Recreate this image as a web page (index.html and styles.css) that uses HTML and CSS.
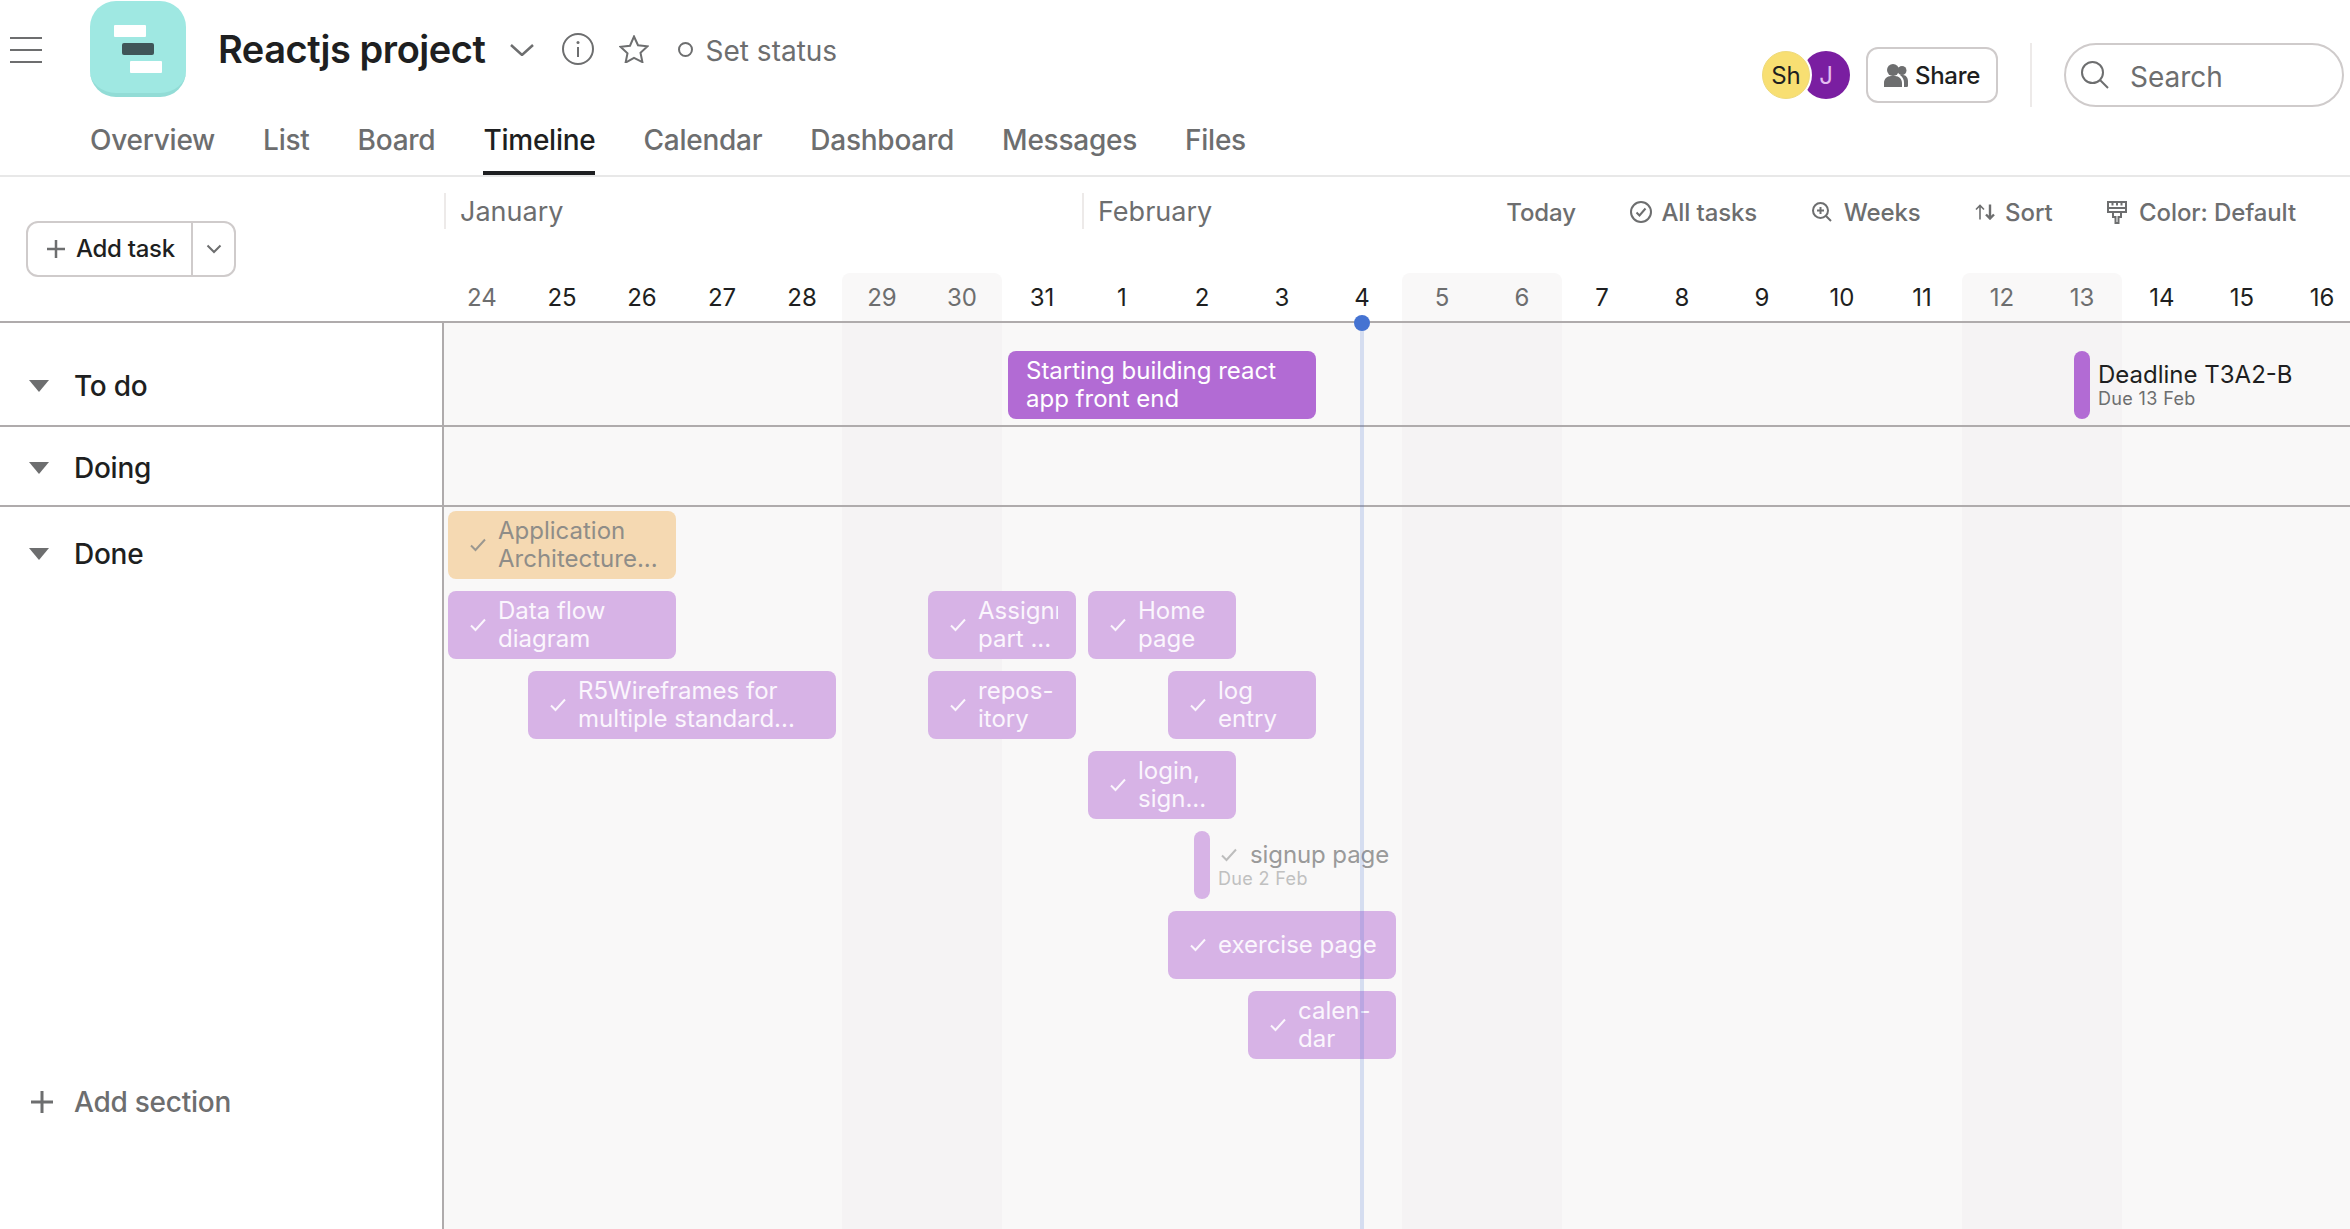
FILE: index.html
```html
<!DOCTYPE html>
<html lang="en">

<head>
    <meta charset="UTF-8">
    <title>Reactjs project - Timeline</title>
    <link rel="stylesheet" href="styles.css">
</head>

<body>

    <!-- Project header -->
    <header class="page-header">
        <div class="top-row">
            <div class="project">
                <svg class="menu-icon" width="32" height="26" viewBox="0 0 32 26"><path d="M0 1h32M0 13h32M0 25h32" /></svg>
                <div class="logo">
                    <span class="logo-bar"></span>
                    <span class="logo-bar logo-bar-dark"></span>
                    <span class="logo-bar logo-bar-last"></span>
                </div>
                <h1>Reactjs project</h1>
                <svg class="title-chevron" width="24" height="12" viewBox="0 0 24 12"><path d="M1 1l11 10L23 1" /></svg>
                <svg class="info-icon" width="32" height="32" viewBox="0 0 32 32"><circle cx="16" cy="16" r="15" /><path d="M16 14v10" /><circle class="solid" cx="16" cy="9.500" r="1.500" /></svg>
                <svg class="star-icon" width="30" height="28" viewBox="0 0 30 28"><path d="M15 1.500l4 8.700 9.500 1.100-7 6.500 1.900 9.300L15 22.900l-8.400 4.700 1.900-9.300-7-6.500 9.500-1.100z" /></svg>
                <span class="status-dot"></span>
                <span class="status-text">Set status</span>
            </div>
            <div class="actions">
                <div class="avatars">
                    <span class="avatar avatar-sh">Sh</span>
                    <span class="avatar avatar-j">J</span>
                </div>
                <button class="share-btn">
                    <svg width="24" height="24" viewBox="0 0 24 24"><circle cx="9" cy="7" r="6" /><circle cx="18" cy="7.500" r="4.500" /><path d="M0 24v-4c0-4 3-7 7-7h4c4 0 7 3 7 7v4zM16 12h3c3 0 5 3 5 6v5c0 1-1 1-4 1v-4c0-3-1-6-4-8z" /></svg>
                    Share
                </button>
                <span class="actions-divider"></span>
                <div class="search">
                    <svg width="28" height="28" viewBox="0 0 28 28"><circle cx="11.500" cy="11.500" r="10.500" /><path d="M19 19l8 8" /></svg>
                    <span class="search-text">Search</span>
                </div>
            </div>
        </div>
        <nav class="tabs">
            <a href="#">Overview</a>
            <a href="#">List</a>
            <a href="#">Board</a>
            <a href="#" class="active">Timeline</a>
            <a href="#">Calendar</a>
            <a href="#">Dashboard</a>
            <a href="#">Messages</a>
            <a href="#">Files</a>
        </nav>
    </header>

    <!-- Timeline head -->
    <section class="timeline-head">
        <div class="add-area">
            <div class="add-task">
                <span class="add-task-main">
                    <svg width="20" height="20" viewBox="0 0 20 20"><path d="M10 1v18M1 10h18" /></svg>
                    Add task
                </span>
                <span class="add-task-more">
                    <svg width="16" height="10" viewBox="0 0 16 10"><path d="M1.500 1.500L8 8l6.500-6.500" /></svg>
                </span>
            </div>
        </div>
        <div class="calendar-head">
            <div class="months">
                <span class="month month-jan">January</span>
                <span class="month">February</span>
                <div class="toolbar">
                    <span class="tool tool-today">Today</span>
                    <span class="tool tool-tasks">
                        <svg width="22" height="22" viewBox="0 0 22 22"><circle cx="11" cy="11" r="10" /><path d="M6.500 11.500l3 3 6-7" /></svg>
                        All tasks
                    </span>
                    <span class="tool">
                        <svg width="20" height="20" viewBox="0 0 20 20"><circle cx="8.500" cy="8.500" r="7.500" /><path d="M14 14l5 5M8.500 5v7M5 8.500h7" /></svg>
                        Weeks
                    </span>
                    <span class="tool tool-sort">
                        <svg width="20" height="16" viewBox="0 0 20 16"><path d="M5 15.500V2M1 5.500L5 1.500l4 4" stroke-width="1.600" /><path d="M15 .5V14M11 10.500l4 4 4-4" stroke-width="2.400" /></svg>
                        Sort
                    </span>
                    <span class="tool">
                        <svg width="20" height="23" viewBox="0 0 20 23"><path d="M1 1h18v10H1zM1 7h18M5.500 1v3.500M10 1v3.500M14.500 1v3.500M6 11v5h2.500v6h3v-6H14v-5" /></svg>
                        Color: Default
                    </span>
                </div>
            </div>
            <div class="days">
                <span class="day past">24</span>
                <span class="day">25</span>
                <span class="day">26</span>
                <span class="day">27</span>
                <span class="day">28</span>
                <span class="day weekend first">29</span>
                <span class="day weekend last">30</span>
                <span class="day">31</span>
                <span class="day">1</span>
                <span class="day">2</span>
                <span class="day">3</span>
                <span class="day">4</span>
                <span class="day weekend first">5</span>
                <span class="day weekend last">6</span>
                <span class="day">7</span>
                <span class="day">8</span>
                <span class="day">9</span>
                <span class="day">10</span>
                <span class="day">11</span>
                <span class="day weekend first">12</span>
                <span class="day weekend last">13</span>
                <span class="day">14</span>
                <span class="day">15</span>
                <span class="day">16</span>
            </div>
        </div>
    </section>

    <!-- Sections and their tasks -->
    <main class="gantt">
        <div class="today-line"></div>

        <section class="row row-todo">
            <div class="row-label">
                <h2><i class="caret"></i>To do</h2>
            </div>
            <div class="lane">
                <div class="lane-grid">
                    <div class="bar bar-open" style="grid-column: 8 / span 4; grid-row: 1">
                        <div class="bar-text"><span>Starting building react</span><span>app front end</span></div>
                    </div>
                    <div class="milestone" style="grid-column: 21; grid-row: 1">
                        <span class="pin"></span>
                        <div class="pin-text">
                            <span class="pin-title">Deadline T3A2-B</span>
                            <span class="pin-due">Due 13 Feb</span>
                        </div>
                    </div>
                </div>
            </div>
        </section>

        <section class="row row-doing">
            <div class="row-label">
                <h2><i class="caret"></i>Doing</h2>
            </div>
            <div class="lane"></div>
        </section>

        <section class="row row-done">
            <div class="row-label">
                <h2><i class="caret"></i>Done</h2>
                <div class="add-section">
                    <svg width="24" height="24" viewBox="0 0 24 24"><path d="M12 1v22M1 12h22" /></svg>
                    Add section
                </div>
            </div>
            <div class="lane">
                <div class="lane-grid">
                    <div class="bar bar-done bar-orange" style="grid-column: 1 / span 3; grid-row: 1">
                        <svg class="check" width="16" height="14" viewBox="0 0 16 14"><path d="M1 7.500l4.500 4.500L15 1.500" /></svg>
                        <div class="bar-text"><span>Application</span><span>Architecture...</span></div>
                    </div>
                    <div class="bar bar-done" style="grid-column: 1 / span 3; grid-row: 2">
                        <svg class="check" width="16" height="14" viewBox="0 0 16 14"><path d="M1 7.500l4.500 4.500L15 1.500" /></svg>
                        <div class="bar-text"><span>Data flow</span><span>diagram</span></div>
                    </div>
                    <div class="bar bar-done" style="grid-column: 7 / span 2; grid-row: 2">
                        <svg class="check" width="16" height="14" viewBox="0 0 16 14"><path d="M1 7.500l4.500 4.500L15 1.500" /></svg>
                        <div class="bar-text"><span>Assignment</span><span>part ...</span></div>
                    </div>
                    <div class="bar bar-done" style="grid-column: 9 / span 2; grid-row: 2">
                        <svg class="check" width="16" height="14" viewBox="0 0 16 14"><path d="M1 7.500l4.500 4.500L15 1.500" /></svg>
                        <div class="bar-text"><span>Home</span><span>page</span></div>
                    </div>
                    <div class="bar bar-done" style="grid-column: 2 / span 4; grid-row: 3">
                        <svg class="check" width="16" height="14" viewBox="0 0 16 14"><path d="M1 7.500l4.500 4.500L15 1.500" /></svg>
                        <div class="bar-text"><span>R5Wireframes for</span><span>multiple standard...</span></div>
                    </div>
                    <div class="bar bar-done" style="grid-column: 7 / span 2; grid-row: 3">
                        <svg class="check" width="16" height="14" viewBox="0 0 16 14"><path d="M1 7.500l4.500 4.500L15 1.500" /></svg>
                        <div class="bar-text"><span>repos-</span><span>itory</span></div>
                    </div>
                    <div class="bar bar-done" style="grid-column: 10 / span 2; grid-row: 3">
                        <svg class="check" width="16" height="14" viewBox="0 0 16 14"><path d="M1 7.500l4.500 4.500L15 1.500" /></svg>
                        <div class="bar-text"><span>log</span><span>entry</span></div>
                    </div>
                    <div class="bar bar-done" style="grid-column: 9 / span 2; grid-row: 4">
                        <svg class="check" width="16" height="14" viewBox="0 0 16 14"><path d="M1 7.500l4.500 4.500L15 1.500" /></svg>
                        <div class="bar-text"><span>login,</span><span>sign...</span></div>
                    </div>
                    <div class="milestone milestone-done" style="grid-column: 10; grid-row: 5">
                        <span class="pin"></span>
                        <div class="pin-text">
                            <span class="pin-title">
                                <svg class="check" width="16" height="14" viewBox="0 0 16 14"><path d="M1 7.500l4.500 4.500L15 1.500" /></svg>
                                signup page
                            </span>
                            <span class="pin-due">Due 2 Feb</span>
                        </div>
                    </div>
                    <div class="bar bar-done" style="grid-column: 10 / span 3; grid-row: 6">
                        <svg class="check" width="16" height="14" viewBox="0 0 16 14"><path d="M1 7.500l4.500 4.500L15 1.500" /></svg>
                        <div class="bar-text"><span>exercise page</span></div>
                    </div>
                    <div class="bar bar-done" style="grid-column: 11 / span 2; grid-row: 7">
                        <svg class="check" width="16" height="14" viewBox="0 0 16 14"><path d="M1 7.500l4.500 4.500L15 1.500" /></svg>
                        <div class="bar-text"><span>calen-</span><span>dar</span></div>
                    </div>
                </div>
            </div>
        </section>
    </main>

</body>
</html>
```

FILE: styles.css
```css
/* General Reset */
* {
    margin: 0;
    padding: 0;
    box-sizing: border-box;
}

html, body {
    height: 100%;
}

body {
    width: 2350px;
    font-family: Inter, "Noto Sans", sans-serif;
    color: #1e1f21;
    background-color: #fff;
    overflow: hidden;
}

svg {
    display: block;
    flex: none;
    fill: none;
    stroke: #6d6e6f;
    stroke-width: 2;
}

/* Project header */
.page-header {
    border-bottom: 2px solid #e8e8e8;
}

.top-row {
    display: flex;
    height: 116px;
}

.project {
    display: flex;
    align-items: center;
    height: 98px;
    padding-left: 10px;
}

.menu-icon {
    margin-top: 2px;
}

.logo {
    display: flex;
    flex-direction: column;
    width: 96px;
    height: 96px;
    margin-left: 48px;
    padding-top: 24px;
    background-color: #9fe8e2;
    border-bottom: 4px solid #92dcd6;
    border-radius: 26px;
}

.logo-bar {
    width: 32px;
    height: 12px;
    margin-left: 24px;
    margin-bottom: 6px;
    background-color: #fff;
    border-radius: 1px;
}

.logo-bar-dark {
    margin-left: 32px;
    background-color: #3f5558;
    border-radius: 2px;
}

.logo-bar-last {
    margin-left: 40px;
}

h1 {
    margin-left: 32px;
    font-size: 38px;
    font-weight: 600;
    letter-spacing: -0.45px;
}

.title-chevron {
    margin-left: 24px;
    margin-top: 2px;
    stroke-width: 2.500;
}

.info-icon {
    margin-left: 28px;
}

.info-icon .solid {
    fill: #6d6e6f;
    stroke: none;
}

.star-icon {
    margin-left: 25px;
}

.status-dot {
    width: 15px;
    height: 15px;
    margin-left: 29px;
    border: 2px solid #6d6e6f;
    border-radius: 50%;
}

.status-text {
    margin-left: 13px;
    margin-top: 3px;
    font-size: 28px;
    color: #6d6e6f;
}

.actions {
    display: flex;
    align-items: center;
    height: 64px;
    margin-top: 43px;
    margin-left: auto;
    padding-right: 6px;
}

.avatars {
    display: flex;
}

.avatar {
    display: flex;
    align-items: center;
    justify-content: center;
    width: 48px;
    height: 48px;
    border-radius: 50%;
    font-size: 24px;
}

.avatar-sh {
    position: relative;
    background-color: #f8df72;
    box-shadow: 0 0 0 2px #fff;
    border: 1px solid #eeda7d;
}

.avatar-j {
    margin-left: -8px;
    color: #e3bdf0;
    background-color: #7a1ea1;
}

.share-btn {
    display: flex;
    align-items: center;
    gap: 7px;
    width: 132px;
    height: 56px;
    margin-left: 16px;
    padding-left: 16px;
    font-family: inherit;
    font-size: 24px;
    font-weight: 500;
    letter-spacing: -0.3px;
    color: #1e1f21;
    background-color: #fff;
    border: 2px solid #cfcbcb;
    border-radius: 12px;
}

.share-btn svg {
    fill: #6d6e6f;
    stroke: none;
}

.actions-divider {
    width: 2px;
    height: 64px;
    margin-left: 32px;
    background-color: #edeae9;
}

.search {
    display: flex;
    align-items: center;
    gap: 21px;
    width: 280px;
    height: 64px;
    margin-left: 32px;
    padding-left: 15px;
    font-size: 28px;
    color: #6d6e6f;
    border: 2px solid #cfcbcb;
    border-radius: 32px;
}

.search-text {
    margin-top: 3px;
}

/* Tabs */
.tabs {
    display: flex;
    gap: 48px;
    height: 59px;
    padding-left: 90px;
}

.tabs a {
    height: 59px;
    padding-top: 7px;
    font-size: 28px;
    font-weight: 500;
    letter-spacing: -0.25px;
    line-height: 34px;
    color: #6d6e6f;
    text-decoration: none;
    border-bottom: 4px solid transparent;
}

.tabs a.active {
    color: #1e1f21;
    border-bottom-color: #1e1f21;
}

/* Timeline head */
.timeline-head {
    display: flex;
    height: 146px;
    border-bottom: 2px solid #afabac;
}

.add-area {
    flex: none;
    width: 441px;
    padding-top: 44px;
    padding-left: 26px;
}

.add-task {
    display: flex;
    width: 210px;
    height: 56px;
    font-size: 24px;
    font-weight: 500;
    letter-spacing: -0.3px;
    border: 2px solid #cfcbcb;
    border-radius: 12px;
}

.add-task-main {
    display: flex;
    align-items: center;
    gap: 10px;
    width: 165px;
    padding-left: 18px;
    padding-bottom: 2px;
    border-right: 2px solid #cfcbcb;
}

.add-task-main svg {
    margin-top: 2px;
    stroke-width: 2.500;
}

.add-task-more {
    display: flex;
    align-items: center;
    justify-content: center;
    flex: 1;
}

.calendar-head {
    display: flex;
    flex-direction: column;
    justify-content: space-between;
    width: 1920px;
}

.months {
    display: flex;
    align-items: center;
    height: 36px;
    margin-top: 16px;
}

.month {
    padding-left: 14px;
    height: 36px;
    font-size: 27px;
    line-height: 37px;
    color: #6d6e6f;
    border-left: 2px solid #edeae9;
}

.month-jan {
    width: 638px;
    margin-left: 3px;
}

.toolbar {
    display: flex;
    align-items: center;
    gap: 54.500px;
    margin-left: auto;
    margin-top: 2px;
    padding-right: 65px;
    font-size: 24px;
    font-weight: 500;
    letter-spacing: -0.1px;
    color: #6d6e6f;
}

.tool {
    display: flex;
    align-items: center;
    gap: 12px;
    white-space: nowrap;
}

.tool-tasks {
    gap: 9px;
}

.tool-sort {
    gap: 10px;
}

/* Day numbers */
.days {
    display: flex;
    height: 48px;
    margin-left: 1px;
}

.day {
    flex: none;
    width: 80px;
    padding-top: 11px;
    font-size: 24px;
    line-height: 28px;
    text-align: center;
}

.day.past {
    color: #6d6e6f;
}

.day.weekend {
    color: #6d6e6f;
    background-color: #f9f8f8;
}

.day.first {
    border-top-left-radius: 8px;
}

.day.last {
    border-top-right-radius: 8px;
}

/* Sections */
.gantt {
    position: relative;
    height: 906px;
}

.today-line {
    position: absolute;
    z-index: 2;
    top: 0;
    bottom: 0;
    left: 1360px;
    width: 4px;
    background-color: rgba(69, 115, 210, 0.2);
}

.today-line::before {
    content: "";
    position: absolute;
    top: -8px;
    left: -6px;
    width: 16px;
    height: 16px;
    background-color: #4573d2;
    border-radius: 50%;
}

.row {
    display: flex;
    border-bottom: 2px solid #afabac;
}

.row-todo {
    height: 104px;
}

.row-doing {
    height: 80px;
}

.row-done {
    height: 722px;
    border-bottom: none;
}

.row-label {
    flex: none;
    width: 444px;
    border-right: 2px solid #afabac;
}

.row-todo .row-label {
    padding-top: 46px;
}

.row-doing .row-label {
    padding-top: 24px;
}

.row-done .row-label {
    padding-top: 30px;
}

h2 {
    display: flex;
    align-items: center;
    padding-left: 29px;
    font-size: 28px;
    font-weight: 500;
    letter-spacing: -0.25px;
    line-height: 34px;
}

.caret {
    width: 0;
    height: 0;
    margin-right: 25px;
    border-top: 12px solid #6d6e6f;
    border-left: 10px solid transparent;
    border-right: 10px solid transparent;
}

.add-section {
    display: flex;
    align-items: center;
    gap: 20px;
    margin-top: 514px;
    padding-left: 30px;
    font-size: 28px;
    font-weight: 500;
    letter-spacing: -0.25px;
    line-height: 34px;
    color: #6d6e6f;
}

.add-section svg {
    stroke-width: 3;
}

/* Lanes with weekend stripes */
.lane {
    flex: 1;
    min-width: 0;
    background-color: #f9f8f8;
    background-image: linear-gradient(90deg, #f9f8f8 398px, #f5f3f4 398px, #f5f3f4 558px, #f9f8f8 558px, #f9f8f8 958px, #f5f3f4 958px, #f5f3f4 1118px, #f9f8f8 1118px, #f9f8f8 1518px, #f5f3f4 1518px, #f5f3f4 1678px, #f9f8f8 1678px);
}

.lane-grid {
    display: grid;
    grid-template-columns: repeat(24, 80px);
    grid-auto-rows: 80px;
    margin-left: -3px;
}

.row-todo .lane-grid {
    padding-top: 28px;
}

.row-done .lane-grid {
    padding-top: 4px;
}

/* Task bars */
.bar {
    display: flex;
    align-items: center;
    height: 68px;
    margin: 0 5px 0 7px;
    padding-left: 22px;
    font-size: 24px;
    line-height: 28px;
    border-radius: 8px;
    min-width: 0;
}

.bar-text {
    flex: 1;
    min-width: 0;
    padding-right: 18px;
}

.bar-text span {
    display: block;
    overflow: hidden;
    white-space: nowrap;
}

.bar-open {
    padding-left: 18px;
    color: #fff;
    background-color: #b26bd4;
}

.bar-done {
    color: #fbf6fd;
    background-color: #d7b3e6;
}

.check {
    margin-right: 12px;
    stroke: #fbf6fd;
}

.bar-orange {
    color: #8f8d88;
    background-color: #f5d9b2;
}

.bar-orange .check {
    stroke: #9b9890;
}

/* Milestones */
.milestone {
    display: flex;
    gap: 8px;
    width: max-content;
    height: 68px;
    margin-left: 33px;
}

.pin {
    width: 16px;
    height: 68px;
    background-color: #b26bd4;
    border-radius: 8px;
}

.pin-text {
    display: flex;
    flex-direction: column;
    padding-top: 10px;
}

.pin-title {
    display: flex;
    align-items: center;
    font-size: 24px;
    line-height: 28px;
    white-space: nowrap;
}

.pin-due {
    font-size: 18px;
    letter-spacing: 0.35px;
    line-height: 20px;
    color: #6d6e6f;
}

.milestone-done .pin {
    background-color: #d7b3e6;
}

.milestone-done .check {
    margin-left: 3px;
    margin-right: 13px;
    stroke: #bdbdbd;
}

.milestone-done .pin-title {
    letter-spacing: -0.1px;
    color: #9a9a9a;
}

.milestone-done .pin-due {
    color: #c0c0c0;
}
```
